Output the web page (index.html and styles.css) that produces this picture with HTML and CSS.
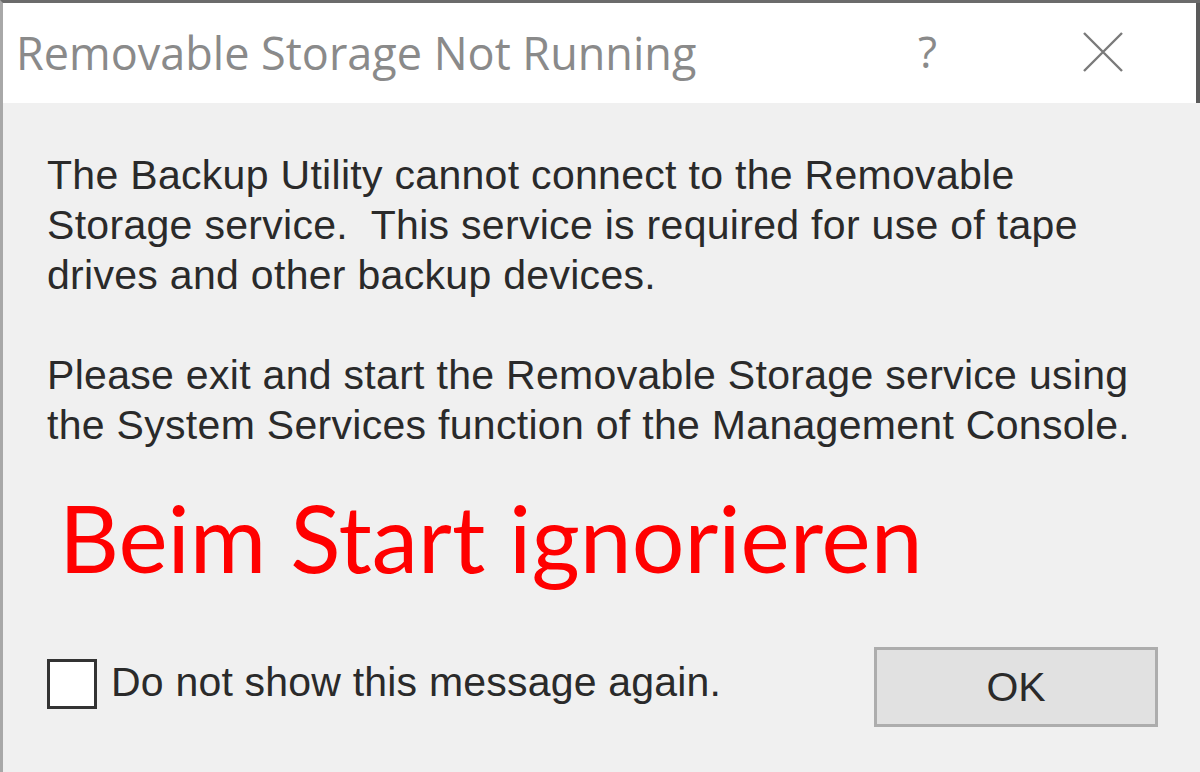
FILE: index.html
```html
<!DOCTYPE html>
<html lang="en">
<head>
    <meta charset="UTF-8">
    <title>Removable Storage Not Running</title>
    <link rel="stylesheet" href="styles.css">
</head>
<body>

    <div class="dialog">
        <!-- Titelleiste -->
        <div class="titlebar">
            <span class="title">Removable Storage Not Running</span>
            <span class="help">?</span>
            <span class="close">
                <svg width="42" height="42" viewBox="0 0 42 42">
                    <path d="M2 2 L40 40 M40 2 L2 40" stroke="#7a7a7a" stroke-width="2.4" fill="none"/>
                </svg>
            </span>
        </div>

        <div class="content">
            <p class="msg">The Backup Utility cannot connect to the Removable<br>Storage service.&nbsp; This service is required for use of tape<br>drives and other backup devices.</p>
            <p class="msg">Please exit and start the Removable Storage service using<br>the System Services function of the Management Console.</p>

            <div class="note">Beim Start ignorieren</div>

            <div class="footer">
                <label class="check">
                    <span class="box"></span>
                    <span>Do not show this message again.</span>
                </label>
                <button class="ok">OK</button>
            </div>
        </div>
    </div>

</body>
</html>
```

FILE: styles.css
```css
html, body {
    margin: 0;
    padding: 0;
    background-color: #f0f0f0;
}

.dialog {
    width: 1200px;
    height: 772px;
    box-sizing: border-box;
    border-top: 3px solid #6b6b6b;
    border-left: 3px solid #a8a8a8;
    overflow: hidden;
    background-color: #f0f0f0;
}

/* Titelleiste */
.titlebar {
    height: 100px;
    background-color: #ffffff;
    display: flex;
    align-items: center;
    border-right: 4px solid #5a5a5a;
}

.title {
    flex: 1;
    padding-left: 13px;
    margin-top: -2px;
    font-family: "Open Sans", "Noto Sans", sans-serif;
    font-size: 45px;
    color: #8a8a8a;
}

.help {
    width: 40px;
    margin-right: 124px;
    font-family: "Open Sans", sans-serif;
    font-size: 44px;
    color: #8a8a8a;
    margin-top: -4px;
}

.close {
    display: flex;
    margin-right: 72px;
    margin-top: -2px;
}

/* Inhalt */
.content {
    padding: 47px 0 0 44px;
}

.msg {
    margin: 0 0 50px 0;
    font-family: "Liberation Sans", Arial, sans-serif;
    font-size: 41px;
    line-height: 50px;
    color: #2a2a2a;
    letter-spacing: 0.3px;
}

.note {
    margin-top: -18px;
    padding-left: 12px;
    font-family: "Lato", "Open Sans", sans-serif;
    font-size: 93px;
    line-height: 110px;
    color: #ff0000;
}

.footer {
    display: flex;
    align-items: flex-start;
    justify-content: space-between;
    margin-top: 55px;
    padding-right: 42px;
}

.check {
    display: flex;
    align-items: center;
    margin-top: 8px;
    font-family: "Liberation Sans", Arial, sans-serif;
    font-size: 41px;
    color: #2a2a2a;
    letter-spacing: 0.2px;
}

.box {
    width: 44px;
    height: 44px;
    border: 3px solid #333333;
    background-color: #ffffff;
    margin-right: 14px;
    margin-top: 4px;
}

.ok {
    width: 284px;
    height: 80px;
    border: 3px solid #adadad;
    background-color: #e1e1e1;
    font-family: "Liberation Sans", Arial, sans-serif;
    font-size: 41px;
    color: #2a2a2a;
}
```
